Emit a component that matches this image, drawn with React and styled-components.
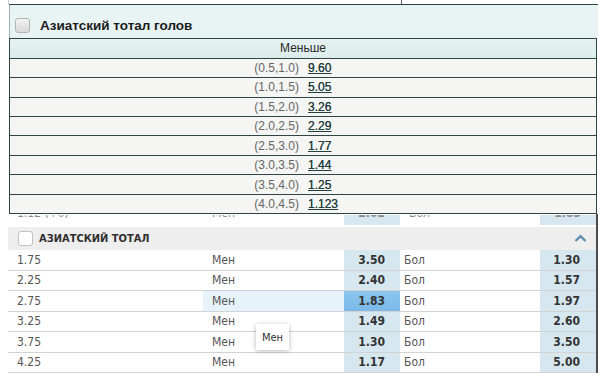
import React from 'react';
import styled, { createGlobalStyle } from 'styled-components';

const Global = createGlobalStyle`
  html, body { margin: 0; padding: 0; background: #fff; }
  body { width: 606px; height: 378px; overflow: hidden; }
`;

const Page = styled.div`
  width: 606px;
  height: 378px;
  display: flex;
  flex-direction: column;
`;

const TopStrip = styled.div`
  height: 4px;
  display: flex;
  padding-left: 8px;
`;
const StripEdge = styled.div`
  width: 1px;
  background: #c4cccc;
`;
const StripTick = styled.div`
  width: 1px;
  margin-left: 392px;
  background: #666;
`;

const GoalsPanel = styled.section`
  margin-left: 9px;
  width: 589px;
  border-top: 1px solid #2f4545;
  font-family: "Liberation Sans", Arial, sans-serif;
`;

const GoalsHeader = styled.div`
  height: 33px;
  box-sizing: border-box;
  display: flex;
  align-items: center;
  gap: 10px;
  padding: 7px 0 0 5px;
  background: #e8f3f3;
  border-left: 1px solid #9fb2b2;
  font-weight: bold;
  font-size: 13.5px;
  color: #1c1c1c;
`;

const GreyBox = styled.span`
  width: 15px;
  height: 15px;
  box-sizing: border-box;
  border: 1px solid #b4b4b4;
  border-radius: 3px;
  background: linear-gradient(#f2f2f2, #d9d9d9);
`;

const GoalsTable = styled.div`
  width: 588px;
  box-sizing: border-box;
  border-left: 1px solid #2f4545;
  border-right: 1px solid #2f4545;
  border-top: 1px solid #2f4545;
  font-size: 12px;
`;

const GoalsHead = styled.div`
  height: 19.7px;
  box-sizing: border-box;
  border-bottom: 1px solid #2f4545;
  display: flex;
  align-items: center;
  justify-content: center;
  background: linear-gradient(#e6f2f2, #dcebeb);
  color: #2a2a2a;
`;

const GoalsRow = styled.div`
  height: 19.45px;
  box-sizing: border-box;
  border-bottom: 1px solid #2f4545;
  display: grid;
  grid-template-columns: 1fr 1fr;
  align-items: center;
  background: #f5f5f4;
  color: #666;
`;

const Range = styled.span`
  text-align: right;
  padding-right: 4px;
`;

const OddLink = styled.a`
  justify-self: start;
  padding-left: 5px;
  color: #243f3f;
  text-decoration: underline;
  text-shadow: 0 0 0.4px #243f3f;
`;

const TotalsPanel = styled.section`
  position: relative;
  margin-left: 8px;
  width: 590px;
  box-sizing: border-box;
  border-right: 2px solid #4c4c4c;
  font-family: "DejaVu Sans Condensed", "DejaVu Sans", sans-serif;
  font-size: 12px;
  color: #555;
`;

const COLS = '195px 141px 56px 140px 56px';

const ClipRow = styled.div`
  height: 10px;
  margin-top: 1px;
  overflow: hidden;
  display: grid;
  grid-template-columns: ${COLS};
  color: #8a8a8a;
`;

const ClipCell = styled.div`
  display: flex;
  justify-content: ${p => (p.$odd ? 'flex-end' : 'flex-start')};
  padding: ${p => (p.$odd ? '0 15px 0 0' : '0 0 0 9px')};
  background: ${p => (p.$odd ? '#d7e7f0' : 'transparent')};
  font-weight: ${p => (p.$odd ? 'bold' : 'normal')};
  & > span {
    line-height: 14px;
    margin-top: -9px;
  }
`;

const SectionHeader = styled.div`
  height: 23px;
  margin-top: 2px;
  display: flex;
  align-items: center;
  gap: 6px;
  padding: 0 9px 0 10px;
  background: #eeeeee;
  font-weight: bold;
  font-size: 11px;
  color: #2e2e2e;
  text-transform: uppercase;
`;

const WhiteBox = styled.span`
  width: 15px;
  height: 15px;
  box-sizing: border-box;
  border: 1px solid #c2c2c2;
  border-radius: 3px;
  background: #fff;
`;

const Chevron = styled.svg`
  margin-left: auto;
  width: 13px;
  height: 9px;
`;

const Row = styled.div`
  height: 20.5px;
  box-sizing: border-box;
  display: grid;
  grid-template-columns: ${COLS};
  border-bottom: 1px solid #d3d3d3;
  background: #fff;
`;

const Label = styled.div`
  display: flex;
  align-items: center;
  padding-left: ${p => p.$pad}px;
  background: ${p => (p.$active ? '#e7f3fb' : 'transparent')};
`;

const Odd = styled.div`
  display: flex;
  align-items: center;
  justify-content: flex-end;
  padding-right: ${p => p.$pad}px;
  font-weight: bold;
  color: #333;
  background: ${p => (p.$active ? 'linear-gradient(#8ec6ee, #7ab9e8)' : '#d7e7f0')};
`;

const Tooltip = styled.div`
  position: absolute;
  left: 248px;
  top: 110px;
  width: 33px;
  height: 26px;
  box-sizing: border-box;
  display: flex;
  align-items: center;
  justify-content: center;
  background: #fff;
  box-shadow: 0 1px 5px rgba(0, 0, 0, 0.28);
  font-size: 11px;
  color: #333;
`;

const goals = [
  ['(0.5,1.0)', '9.60'],
  ['(1.0,1.5)', '5.05'],
  ['(1.5,2.0)', '3.26'],
  ['(2.0,2.5)', '2.29'],
  ['(2.5,3.0)', '1.77'],
  ['(3.0,3.5)', '1.44'],
  ['(3.5,4.0)', '1.25'],
  ['(4.0,4.5)', '1.123'],
];

const totals = [
  ['1.75', '3.50', '1.30'],
  ['2.25', '2.40', '1.57'],
  ['2.75', '1.83', '1.97', true],
  ['3.25', '1.49', '2.60'],
  ['3.75', '1.30', '3.50'],
  ['4.25', '1.17', '5.00'],
];

export default function App() {
  return (
    <Page>
      <Global />
      <TopStrip>
        <StripEdge />
        <StripTick />
      </TopStrip>
      <GoalsPanel>
        <GoalsHeader>
          <GreyBox />
          Азиатский тотал голов
        </GoalsHeader>
        <GoalsTable>
          <GoalsHead>Меньше</GoalsHead>
          {goals.map(([r, v]) => (
            <GoalsRow key={r}>
              <Range>{r}</Range>
              <OddLink>{v}</OddLink>
            </GoalsRow>
          ))}
        </GoalsTable>
      </GoalsPanel>
      <TotalsPanel>
        <ClipRow>
          <ClipCell><span>1.12 (+0)</span></ClipCell>
          <ClipCell><span>Мен</span></ClipCell>
          <ClipCell $odd><span>2.02</span></ClipCell>
          <ClipCell><span>Бол</span></ClipCell>
          <ClipCell $odd><span>1.83</span></ClipCell>
        </ClipRow>
        <SectionHeader>
          <WhiteBox />
          Азиатский тотал
          <Chevron viewBox="0 0 13 9">
            <path d="M1.5 7 L6.5 2.2 L11.5 7" fill="none" stroke="#5f8fb0" strokeWidth="2.4" />
          </Chevron>
        </SectionHeader>
        {totals.map(([t, a, b, active]) => (
          <Row key={t}>
            <Label $pad={9}>{t}</Label>
            <Label $pad={9} $active={active}>Мен</Label>
            <Odd $pad={15} $active={active}>{a}</Odd>
            <Label $pad={4}>Бол</Label>
            <Odd $pad={16}>{b}</Odd>
          </Row>
        ))}
        <Tooltip>Мен</Tooltip>
      </TotalsPanel>
    </Page>
  );
}
